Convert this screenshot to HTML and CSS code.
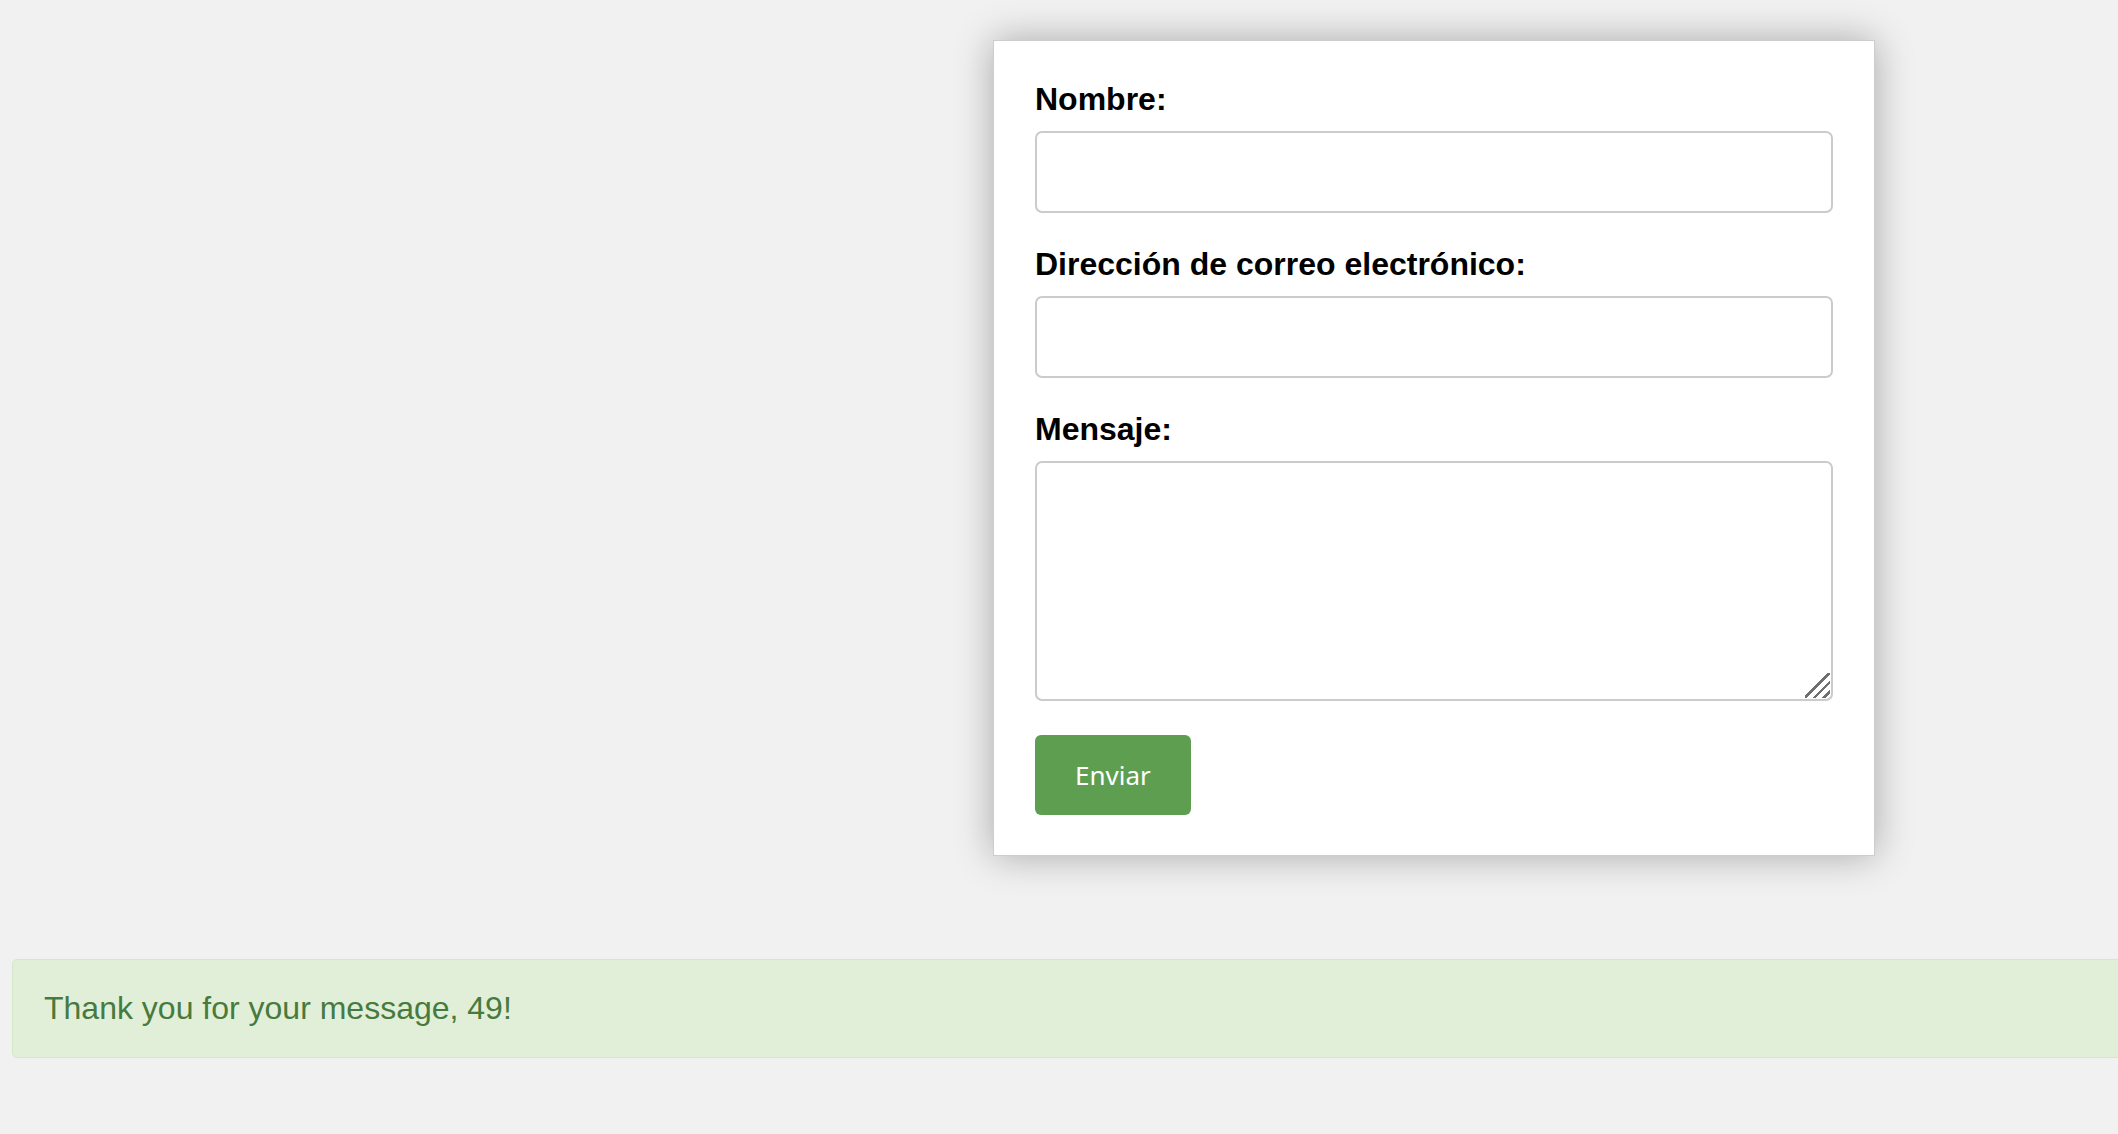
FILE: index.html
```html
<!DOCTYPE html>
<html lang="es">
<head>
    <meta charset="UTF-8">
    <meta name="viewport" content="width=device-width, initial-scale=1.0">
    <title>Contacto</title>
    <link rel="stylesheet" href="styles.css">
</head>
<body>

<form class="contact-form" onsubmit="return false;">
    <label for="nombre">Nombre:</label>
    <input type="text" id="nombre" name="nombre">

    <label for="email">Dirección de correo electrónico:</label>
    <input type="email" id="email" name="email">

    <label for="mensaje">Mensaje:</label>
    <div class="message-field">
        <textarea id="mensaje" name="mensaje"></textarea>
    </div>

    <button type="submit">Enviar</button>
</form>

<div class="alert-success">Thank you for your message, 49!</div>

</body>
</html>
```

FILE: styles.css
```css
html {
    overflow-x: hidden; /* alert is wider than the page */
}

body {
    font-family: "Liberation Sans", Arial, sans-serif;
    background-color: #f1f1f1;
    margin: 0;
    padding: 40px 12px;
}

.contact-form {
    width: 798px;
    margin-left: 981px;
    padding: 40px 41px;
    background-color: #fff;
    border: 1px solid #cdcdcd;
    box-shadow: 0 0 36px rgba(0, 0, 0, 0.3);
}

.contact-form label {
    display: block;
    font-size: 32px;
    font-weight: bold;
    line-height: 37px;
    color: #000;
    margin-bottom: 13px;
}

.contact-form input,
.contact-form textarea {
    display: block;
    width: 100%;
    box-sizing: border-box;
    border: 2px solid #cbcbcb;
    border-radius: 7px;
    background: #fff;
    font-family: inherit;
    font-size: 24px;
    padding: 10px 14px;
    outline: none;
}

.contact-form input {
    height: 82px;
    margin-bottom: 33px;
}

.message-field {
    position: relative;
    margin-bottom: 34px;
}

.contact-form textarea {
    height: 240px;
    resize: none;
}

/* resize grip in the corner */
.message-field::after {
    content: "";
    position: absolute;
    right: 3px;
    bottom: 3px;
    width: 25px;
    height: 25px;
    pointer-events: none;
    background: linear-gradient(135deg,
        transparent 0 46%, #6f6f6f 46% 53%,
        transparent 53% 65%, #6f6f6f 65% 72%,
        transparent 72% 84%, #6f6f6f 84% 91%,
        transparent 91%);
}

.contact-form button {
    display: block;
    height: 80px;
    padding: 0 40px;
    border: none;
    border-radius: 6px;
    background-color: #5e9e51;
    color: #fff;
    font-family: "Noto Sans", "Open Sans", sans-serif;
    font-size: 26px;
    cursor: pointer;
}

.alert-success {
    width: 100%; /* plus padding, so it runs off the right edge */
    margin-top: 103px;
    padding: 30px 31px;
    background-color: #e1efd9;
    border: 1px solid #d4e7c7;
    border-radius: 5px;
    color: #477a3d;
    font-size: 32px;
    line-height: 37px;
}
```
